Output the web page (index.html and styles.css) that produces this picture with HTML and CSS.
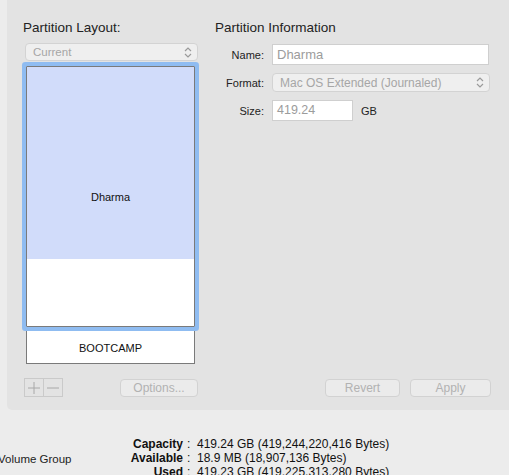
FILE: index.html
```html
<!DOCTYPE html>
<html>
<head>
<meta charset="utf-8">
<link rel="stylesheet" href="styles.css">
</head>
<body>
<div class="panel">
  <div class="top">
    <div class="left">
      <div class="heading heading-left">Partition Layout:</div>
      <div class="popup popup-current">
        <span>Current</span>
        <svg class="chev" width="8" height="11" viewBox="0 0 8 11"><path d="M1 4 L4 1 L7 4 M1 7 L4 10 L7 7" fill="none" stroke="#9a9a9a" stroke-width="1.2"/></svg>
      </div>
      <div class="map">
        <div class="part main">
          <div class="fill"></div>
          <span class="plabel">Dharma</span>
        </div>
        <div class="part boot">BOOTCAMP</div>
      </div>
    </div>
    <div class="right">
      <div class="heading">Partition Information</div>
      <div class="form">
        <div class="row">
          <label class="flabel">Name:</label>
          <div class="field name">Dharma</div>
        </div>
        <div class="row">
          <label class="flabel">Format:</label>
          <div class="popup popup-format">
            <span>Mac OS Extended (Journaled)</span>
            <svg class="chev" width="8" height="11" viewBox="0 0 8 11"><path d="M1 4 L4 1 L7 4 M1 7 L4 10 L7 7" fill="none" stroke="#9a9a9a" stroke-width="1.2"/></svg>
          </div>
        </div>
        <div class="row">
          <label class="flabel">Size:</label>
          <div class="field size">419.24</div>
          <span class="unit">GB</span>
        </div>
      </div>
    </div>
  </div>
  <div class="controls">
    <div class="left-controls">
      <div class="pm">
        <span class="pm-btn"><svg width="12" height="12" viewBox="0 0 12 12"><path d="M6 0 V12 M0 6 H12" stroke="#a8a8a8" stroke-width="1"/></svg></span>
        <span class="pm-btn"><svg width="12" height="12" viewBox="0 0 12 12"><path d="M0 6 H12" stroke="#a8a8a8" stroke-width="1"/></svg></span>
      </div>
      <button class="btn options">Options...</button>
    </div>
    <div class="right-controls">
      <button class="btn revert">Revert</button>
      <button class="btn apply">Apply</button>
    </div>
  </div>
</div>
<div class="info">
  <div class="vg">Volume Group</div>
  <div class="stats">
    <span class="sl">Capacity</span><span class="sv">:&nbsp; 419.24 GB (419,244,220,416 Bytes)</span>
    <span class="sl">Available</span><span class="sv">:&nbsp; 18.9 MB (18,907,136 Bytes)</span>
    <span class="sl">Used</span><span class="sv">:&nbsp; 419.23 GB (419,225,313,280 Bytes)</span>
  </div>
</div>
</body>
</html>
```

FILE: styles.css
```css
html, body {
  margin: 0;
  padding: 0;
  background: #ececec;
  font-family: "Liberation Sans", Arial, sans-serif;
  color: #1a1a1a;
  overflow: hidden;
  width: 509px;
  height: 475px;
}

.panel {
  margin-left: 7px;
  width: 502px;
  height: 410px;
  box-sizing: border-box;
  padding: 20px 18px 0 18px;
  background: #e3e3e3;
  border-bottom-left-radius: 5px;
}

.top {
  display: flex;
  gap: 17px;
}

.left {
  width: 173px;
  display: flex;
  flex-direction: column;
}

.right {
  flex: 1;
  display: flex;
  flex-direction: column;
}

.heading {
  font-size: 13.5px;
  line-height: 16px;
  color: #222;
}

.heading-left {
  margin-left: -2px;
}

.popup {
  display: flex;
  align-items: center;
  justify-content: space-between;
  box-sizing: border-box;
  background: #efefef;
  border: 1px solid #d3d3d3;
  border-radius: 4px;
  color: #a6a6a6;
  font-size: 11.5px;
  padding: 0 5px 0 7px;
}

.popup-current {
  margin-top: 7px;
  height: 18px;
  width: 173px;
}

.chev {
  display: block;
}

.map {
  margin-top: 5px;
  margin-left: 1px;
  width: 169px;
  display: flex;
  flex-direction: column;
}

.part {
  box-sizing: border-box;
  border: 1px solid #7a7a7a;
  background: #fff;
  font-size: 11px;
  color: #111;
}

.main {
  position: relative;
  z-index: 1;
  height: 261px;
  display: grid;
  grid-template-rows: 192px 1fr;
  box-shadow: 0 0 0 4px #8fbcf1;
  border-radius: 1px;
}

.fill {
  grid-row: 1;
  grid-column: 1;
  background: #d1dcfa;
}

.plabel {
  grid-row: 1 / 3;
  grid-column: 1;
  align-self: center;
  justify-self: center;
}

.boot {
  height: 37px;
  border-top: none;
  display: flex;
  align-items: center;
  justify-content: center;
  padding-top: 5px;
}

.form {
  margin-top: 8px;
  display: flex;
  flex-direction: column;
  gap: 8px;
}

.row {
  display: flex;
  align-items: center;
  gap: 8px;
}

.flabel {
  width: 49px;
  text-align: right;
  font-size: 11px;
  color: #222;
}

.field {
  box-sizing: border-box;
  height: 21px;
  background: #fff;
  border: 1px solid #cfcfcf;
  color: #9c9c9c;
  font-size: 13px;
  line-height: 19px;
  padding-left: 4px;
}

.name {
  width: 217px;
}

.popup-format {
  width: 218px;
  height: 19px;
  font-size: 12px;
}

.size {
  width: 81px;
  font-size: 12.5px;
}

.unit {
  font-size: 11px;
  color: #222;
}

.controls {
  margin-top: 14px;
  display: flex;
  justify-content: space-between;
  align-items: center;
}

.left-controls {
  width: 173px;
  display: flex;
  justify-content: space-between;
  align-items: center;
}

.pm {
  display: flex;
  margin-left: -1px;
  border: 1px solid #cacaca;
  height: 17px;
}

.pm-btn {
  width: 18px;
  height: 17px;
  display: flex;
  align-items: center;
  justify-content: center;
}

.pm-btn + .pm-btn {
  border-left: 1px solid #cacaca;
}

.btn {
  font-family: inherit;
  font-size: 12px;
  color: #b2b2b2;
  background: #ebebeb;
  border: 1px solid #d2d2d2;
  border-radius: 4px;
  height: 18px;
  padding: 0;
  line-height: 16px;
}

.options {
  width: 78px;
}

.right-controls {
  display: flex;
  gap: 10px;
}

.revert {
  width: 75px;
}

.apply {
  width: 81px;
}

.info {
  display: flex;
  margin-top: 27px;
}

.vg {
  width: 110px;
  margin-left: -2px;
  font-size: 11.5px;
  align-self: center;
  color: #222;
  padding-top: 1px;
}

.stats {
  display: grid;
  grid-template-columns: 75px auto;
  font-size: 12px;
  line-height: 14px;
  color: #111;
}

.sl {
  text-align: right;
  font-weight: bold;
}

.sv {
  padding-left: 4px;
  white-space: nowrap;
}
```
